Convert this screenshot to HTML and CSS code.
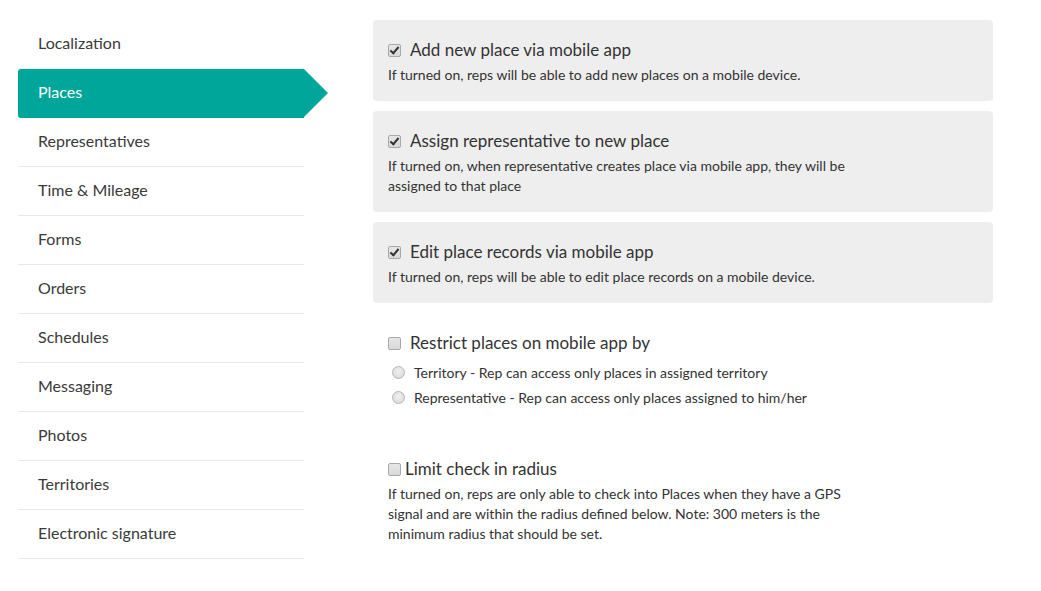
FILE: index.html
```html
<!DOCTYPE html>
<html>
<head>
  <title>Settings - Places</title>
  <meta name="viewport" content="width=device-width, initial-scale=1.0">
  <link rel="stylesheet" href="styles.css">
</head>
<body>
  <div class="layout">
    <ul class="side-nav">
      <li>Localization</li>
      <li class="active">Places</li>
      <li>Representatives</li>
      <li>Time &amp; Mileage</li>
      <li>Forms</li>
      <li>Orders</li>
      <li>Schedules</li>
      <li>Messaging</li>
      <li>Photos</li>
      <li>Territories</li>
      <li>Electronic signature</li>
    </ul>

    <div class="settings">
      <div class="setting card">
        <label class="setting-title"><input type="checkbox" checked> Add new place via mobile app</label>
        <p class="setting-desc">If turned on, reps will be able to add new places on a mobile device.</p>
      </div>

      <div class="setting card">
        <label class="setting-title"><input type="checkbox" checked> Assign representative to new place</label>
        <p class="setting-desc">If turned on, when representative creates place via mobile app, they will be assigned to that place</p>
      </div>

      <div class="setting card">
        <label class="setting-title"><input type="checkbox" checked> Edit place records via mobile app</label>
        <p class="setting-desc">If turned on, reps will be able to edit place records on a mobile device.</p>
      </div>

      <div class="setting">
        <label class="setting-title"><input type="checkbox"> Restrict places on mobile app by</label>
        <div class="radios">
          <label class="radio"><input type="radio" name="restrict"> Territory - Rep can access only places in assigned territory</label>
          <label class="radio"><input type="radio" name="restrict"> Representative - Rep can access only places assigned to him/her</label>
        </div>
      </div>

      <div class="setting radius">
        <label class="setting-title tight"><input type="checkbox"> Limit check in radius</label>
        <p class="setting-desc">If turned on, reps are only able to check into Places when they have a GPS signal and are within the radius defined below. Note: 300 meters is the minimum radius that should be set.</p>
      </div>
    </div>
  </div>
</body>
</html>
```

FILE: styles.css
```css
body {
  font-family: Lato, "Open Sans", sans-serif;
  color: #333;
  margin: 0;
  padding: 20px 18px;
  background: #fff;
}

.layout {
  display: flex;
  gap: 69px;
  align-items: flex-start;
}

.side-nav {
  list-style: none;
  margin: 0;
  padding: 0;
  width: 286px;
  flex-shrink: 0;
}

.side-nav li {
  height: 48px;
  line-height: 46px;
  padding-left: 20px;
  font-size: 16px;
  color: #3a3a3a;
  border-bottom: 1px solid #e9e9e9;
  position: relative;
}

.side-nav li.active {
  background-color: #00a699;
  color: #fff;
  border-radius: 3px 0 0 3px;
  border-bottom-color: #00a699;
}

.side-nav li.active::after {
  content: "";
  position: absolute;
  top: 0;
  right: -24px;
  border-top: 24px solid transparent;
  border-bottom: 24px solid transparent;
  border-left: 24px solid #00a699;
}

.settings {
  width: 620px;
  display: flex;
  flex-direction: column;
  gap: 10px;
}

.setting {
  padding: 20px 15px 16px;
  border-radius: 4px;
}

.card {
  background-color: #eeeeee;
}

.setting-title {
  display: flex;
  align-items: center;
  gap: 9px;
  font-size: 17px;
  line-height: 20px;
}

.setting-title.tight {
  gap: 4px;
}

.setting-desc {
  margin: 5px 0 0;
  font-size: 14px;
  line-height: 20px;
  max-width: 470px;
}

.radius {
  padding-top: 23px;
}

.radios {
  margin-top: 7px;
  padding-left: 4px;
}

.radio {
  display: flex;
  align-items: center;
  gap: 9px;
  height: 25px;
  font-size: 14px;
}

input[type="checkbox"] {
  appearance: none;
  -webkit-appearance: none;
  margin: 0;
  width: 13px;
  height: 13px;
  border: 1px solid #a9a9a9;
  border-radius: 2px;
  background: linear-gradient(#e6e6e6, #d9d9d9);
  box-sizing: border-box;
  position: relative;
  flex-shrink: 0;
}

input[type="checkbox"]:checked::after {
  content: "";
  position: absolute;
  left: 3px;
  top: 0px;
  width: 3px;
  height: 7px;
  border: solid #333;
  border-width: 0 2px 2px 0;
  transform: rotate(40deg);
}

input[type="radio"] {
  appearance: none;
  -webkit-appearance: none;
  margin: 0;
  width: 13px;
  height: 13px;
  border: 1px solid #b5b5b5;
  border-radius: 50%;
  background: radial-gradient(circle at 50% 40%, #f0f0f0, #d6d6d6);
  box-sizing: border-box;
  flex-shrink: 0;
}
```
